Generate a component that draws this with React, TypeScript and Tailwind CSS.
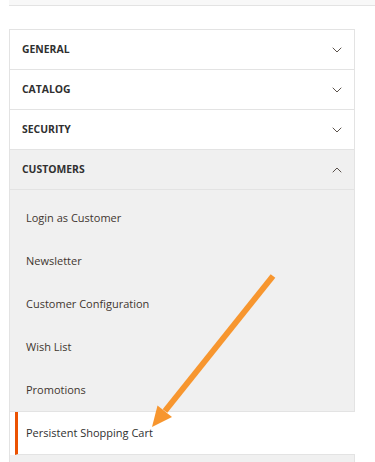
import { ChevronDown, ChevronUp } from 'lucide-react';

const sections = ['General', 'Catalog', 'Security'];
const customerLinks = ['Login as Customer', 'Newsletter', 'Customer Configuration', 'Wish List', 'Promotions'];

function SectionHeader({ title, open }: { title: string; open?: boolean }) {
  return (
    <div
      className={`h-10 flex items-center justify-between pl-3 pr-[9px] border-b border-[#e3e3e3] ${
        open ? 'bg-[#f0f0f0]' : 'bg-white'
      }`}
    >
      <span className="text-[10.4px] font-bold uppercase text-[#303030]">{title}</span>
      {open ? (
        <ChevronUp className="w-4 h-4 text-[#41362f]" strokeWidth={1.3} />
      ) : (
        <ChevronDown className="w-4 h-4 text-[#41362f]" strokeWidth={1.3} />
      )}
    </div>
  );
}

export default function App() {
  return (
    <div className="relative w-[375px] h-[462px] overflow-hidden bg-white" style={{ fontFamily: '"Open Sans", "Liberation Sans", sans-serif' }}>
      {/* top bar */}
      <div className="ml-[9px] h-[6px] bg-[#f8f8f8] border-b border-[#e3e3e3]" />

      {/* config tabs */}
      <div className="mt-[23px] ml-[9px] w-[346px] border-t border-x border-[#e3e3e3]">
        {sections.map((s) => (
          <SectionHeader key={s} title={s} />
        ))}
        <SectionHeader title="Customers" open />

        <div className="bg-[#f0f0f0] pt-[6px] border-b border-[#e3e3e3]">
          {customerLinks.map((link) => (
            <div key={link} className="h-[43px] flex items-center pl-4 pt-[2px] text-[11px] text-[#41362f]">
              {link}
            </div>
          ))}
        </div>

        {/* active item */}
        <div className="h-[43px] ml-[5px] mr-[-1px] flex items-center pl-[8px] pt-px bg-white border-l-[3px] border-l-[#eb5202] border-b border-b-[#e3e3e3] text-[11px] text-[#303030]">
          Persistent Shopping Cart
        </div>

        <div className="h-[20px] bg-[#f0f0f0]" />
      </div>

      {/* annotation arrow */}
      <svg className="absolute left-0 top-0" width="375" height="462" viewBox="0 0 375 462">
        <line x1="273" y1="276" x2="165" y2="411" stroke="#f7962f" strokeWidth="6" />
        <polygon points="152,427 157.5,405.5 172,417" fill="#f7962f" />
      </svg>
    </div>
  );
}
